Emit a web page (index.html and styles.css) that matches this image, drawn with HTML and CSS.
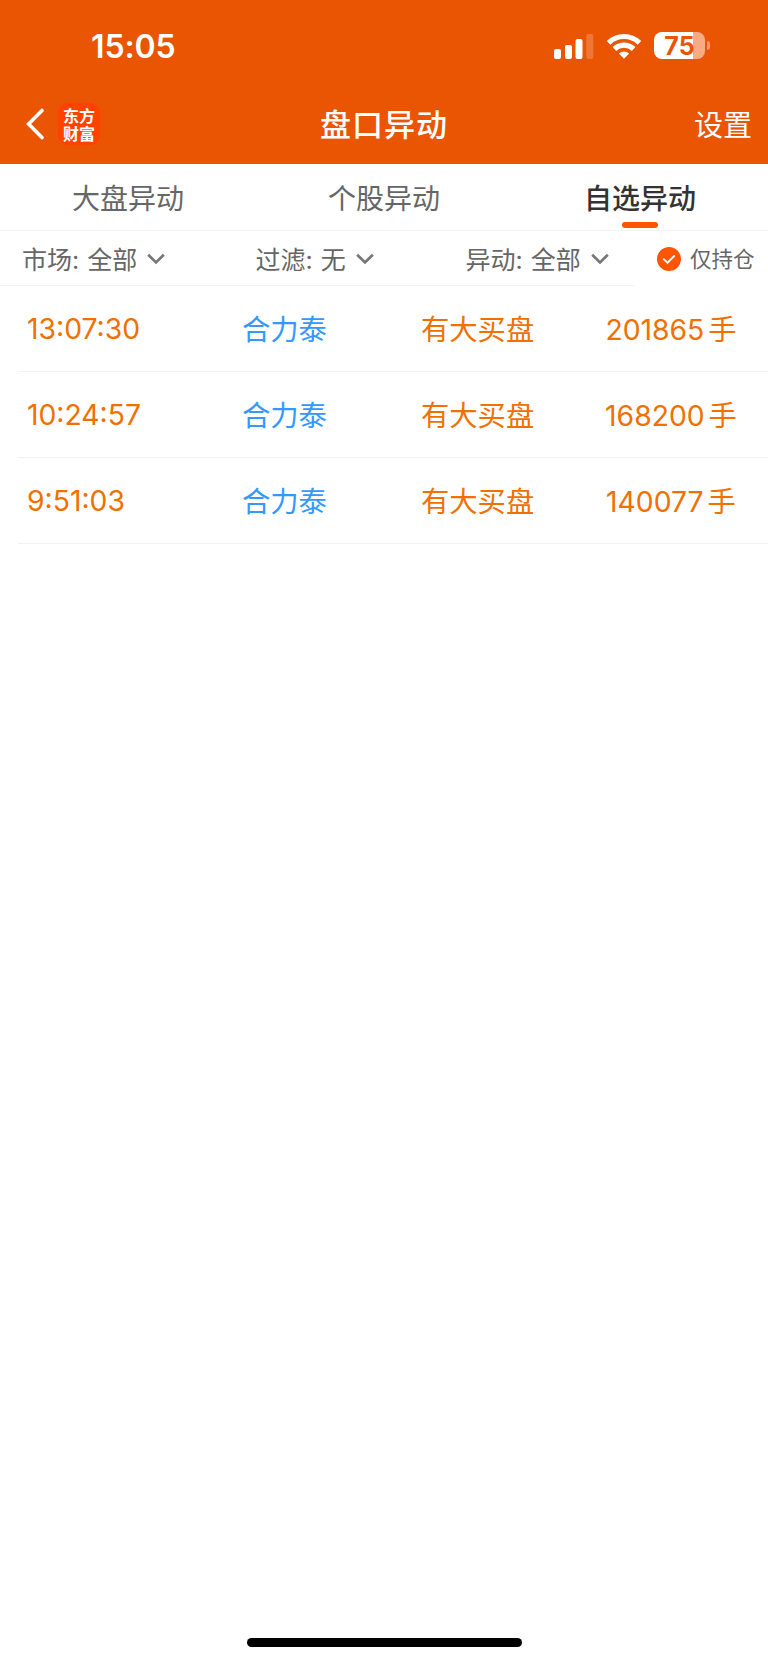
FILE: index.html
```
<!DOCTYPE html>
<html lang="zh-CN">
<head>
    <meta charset="UTF-8">
    <meta name="viewport" content="width=device-width, initial-scale=1.0">
    <title>盘口异动</title>
    <link rel="stylesheet" href="styles.css">
</head>
<body>
    <header class="header">
        <div class="status-bar">
            <span class="clock">15:05</span>
            <div class="status-icons">
                <svg class="signal" width="40" height="26" viewBox="0 0 40 26" fill="#fff">
                    <rect x="0" y="16" width="7" height="10" rx="2"/>
                    <rect x="11" y="12" width="7" height="14" rx="2"/>
                    <rect x="21.5" y="6" width="7" height="20" rx="2"/>
                    <rect x="32.3" y="1" width="7" height="25" rx="2" opacity="0.2"/>
                </svg>
                <svg class="wifi" width="34" height="26" viewBox="0 0 34 26" fill="none" stroke="#fff" stroke-width="5.2">
                    <path d="M1.6 9.8 A22 22 0 0 1 32.4 9.8"/>
                    <path d="M7.4 16 A14 14 0 0 1 26.6 16"/>
                    <path d="M17 25.7 L11.9 20.6 A7.4 7.4 0 0 1 22.1 20.6 Z" fill="#fff" stroke="none"/>
                </svg>
                <div class="battery"><span>75</span></div>
                <div class="battery-cap"></div>
            </div>
        </div>
        <nav class="nav">
            <div class="nav-left">
                <svg width="18" height="32" viewBox="0 0 18 32" fill="none" stroke="#fff" stroke-width="3.6" stroke-linecap="round" stroke-linejoin="miter">
                    <path d="M16 2.5 L2.6 16 L16 29.5"/>
                </svg>
                <div class="logo">东方<br>财富</div>
            </div>
            <h1>盘口异动</h1>
            <a class="settings">设置</a>
        </nav>
    </header>

    <div class="tabs">
        <div class="tab">大盘异动</div>
        <div class="tab">个股异动</div>
        <div class="tab active">自选异动</div>
    </div>

    <div class="filters">
        <div class="filter market">
            <span>市场:</span><span class="value">全部</span>
            <svg class="arrow" width="18" height="12" viewBox="0 0 18 12"><path d="M1.2 1.8 L9 9.4 L16.8 1.8"/></svg>
        </div>
        <div class="filter screen">
            <span>过滤:</span><span class="value">无</span>
            <svg class="arrow" width="18" height="12" viewBox="0 0 18 12"><path d="M1.2 1.8 L9 9.4 L16.8 1.8"/></svg>
        </div>
        <div class="filter change">
            <span>异动:</span><span class="value">全部</span>
            <svg class="arrow" width="18" height="12" viewBox="0 0 18 12"><path d="M1.2 1.8 L9 9.4 L16.8 1.8"/></svg>
        </div>
        <div class="holding">
            <svg width="24" height="24" viewBox="0 0 24 24" fill="none">
                <circle cx="12" cy="12" r="12" fill="#ff5500"/>
                <path d="M6.8 12.2 L10.6 15.6 L17.2 9" stroke="#fff" stroke-width="1.9" stroke-linecap="round"/>
            </svg>
            <span>仅持仓</span>
        </div>
    </div>

    <main class="list">
        <div class="row">
            <span class="time">13:07:30</span>
            <span class="name">合力泰</span>
            <span class="event">有大买盘</span>
            <span class="amount">201865<span class="unit">手</span></span>
        </div>
        <div class="row">
            <span class="time">10:24:57</span>
            <span class="name">合力泰</span>
            <span class="event">有大买盘</span>
            <span class="amount">168200<span class="unit">手</span></span>
        </div>
        <div class="row">
            <span class="time">9:51:03</span>
            <span class="name">合力泰</span>
            <span class="event">有大买盘</span>
            <span class="amount">140077<span class="unit">手</span></span>
        </div>
    </main>

    <div class="home-bar"></div>
</body>
</html>
```
FILE: styles.css
```
* {
    margin: 0;
    padding: 0;
    box-sizing: border-box;
}

body {
    display: flex;
    flex-direction: column;
    height: 1662px;
    background: #fff;
    color: #666;
    font-family: Inter, "Noto Sans CJK SC", sans-serif;
    white-space: nowrap;
}

/* Header */
.header {
    height: 163.5px;
    background: #ea5504;
    color: #fff;
}

.status-bar {
    display: flex;
    justify-content: space-between;
    height: 84px;
    padding: 26px 58px 0 91px;
}

.clock {
    font-size: 32px;
    font-weight: 600;
    line-height: 41px;
    letter-spacing: -0.1px;
}

.status-icons {
    display: flex;
    align-items: center;
    height: 39px;
}

.wifi {
    margin-left: 13px;
}

.battery {
    width: 51px;
    height: 27px;
    margin-left: 13px;
    border-radius: 8px;
    background: linear-gradient(to right, #fff 39px, #f6ab82 39px);
    color: #ea5504;
    font-size: 25px;
    font-weight: 700;
    line-height: 28px;
    text-align: center;
}

.battery-cap {
    width: 3px;
    height: 9px;
    margin-left: 2px;
    border-radius: 0 4px 4px 0;
    background: #f2986a;
}

.nav {
    display: grid;
    grid-template-columns: 1fr auto 1fr;
    align-items: center;
    height: 80px;
    padding: 0 16px 0 26px;
}

.nav-left {
    display: flex;
    align-items: center;
    gap: 14px;
}

.nav h1 {
    margin-left: -10px;
    padding-top: 1px;
    font-size: 31px;
    font-weight: 500;
    line-height: 40px;
    letter-spacing: 1px;
}

.logo {
    width: 42px;
    height: 42px;
    padding-top: 3px;
    border-radius: 9px;
    background: #ff4200;
    font-family: "Noto Sans CJK SC", sans-serif;
    font-size: 16px;
    font-weight: 700;
    line-height: 18px;
    text-align: center;
}

.settings {
    justify-self: end;
    padding-bottom: 2px;
    font-size: 29px;
}

/* Tabs */
.tabs {
    display: grid;
    grid-template-columns: repeat(3, 1fr);
    height: 67.5px;
    border-bottom: 1px solid #f3f3f3;
}

.tab {
    display: flex;
    flex-direction: column;
    align-items: center;
    font-size: 28px;
    line-height: 70px;
}

.tab.active {
    color: #333;
    font-weight: 500;
}

.tab.active::after {
    content: "";
    width: 36px;
    height: 6px;
    margin-top: -12px;
    border-radius: 3px;
    background: #ff5500;
}

/* Filters */
.filters {
    display: grid;
    grid-template-columns: 233.5px 210px 191.5px 1fr;
    height: 55px;
    font-size: 25px;
}

.filter {
    display: flex;
    align-items: center;
    padding-left: 22px;
    border-bottom: 1px solid #f3f3f3;
}

.value {
    margin-left: 8px;
}

.arrow {
    margin: 2px 0 0 10px;
    fill: none;
    stroke: #777;
    stroke-width: 2.8;
}

.holding {
    display: flex;
    align-items: center;
    gap: 9px;
    padding-left: 22px;
    font-size: 21.5px;
}

.holding span {
    padding-bottom: 2px;
}

/* List */
.list {
    flex: 1;
    padding-left: 18px;
}

.row {
    display: grid;
    grid-template-columns: 224px 179px 184px 1fr;
    align-items: center;
    height: 86px;
    border-bottom: 1px solid #f2f2f2;
    color: #f07000;
    font-size: 28.3px;
}

.time {
    padding-left: 9px;
}

.name, .event, .amount {
    padding-bottom: 2px;
}

.name {
    color: #3399ff;
}

.amount {
    width: 132px;
    text-align: center;
}

.unit {
    margin-left: 4px;
}

.home-bar {
    width: 275px;
    height: 9px;
    margin: 0 auto 15px;
    border-radius: 5px;
    background: #000;
}
```
